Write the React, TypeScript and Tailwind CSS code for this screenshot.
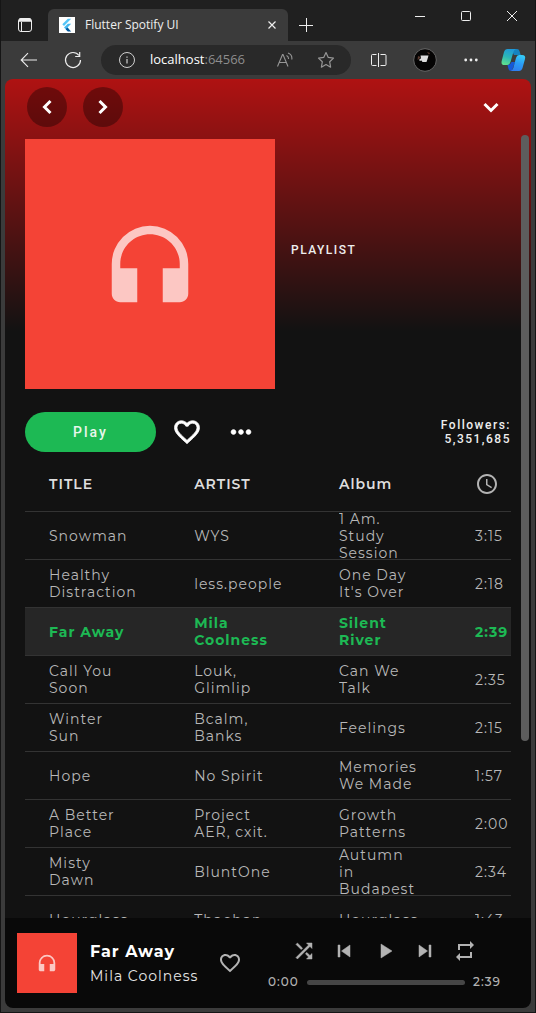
import type { ReactNode } from "react";
import {
  MdHeadphones, MdFavoriteBorder, MdMoreHoriz, MdAccessTime, MdShuffle, MdSkipPrevious,
  MdPlayArrow, MdSkipNext, MdRepeat,
} from "react-icons/md";

type Song = { title: string; artist: string; album: string; time: string };

const songs: Song[] = [
  { title: "Snowman", artist: "WYS", album: "1 Am.\nStudy\nSession", time: "3:15" },
  { title: "Healthy\nDistraction", artist: "less.people", album: "One Day\nIt's Over", time: "2:18" },
  { title: "Far Away", artist: "Mila\nCoolness", album: "Silent\nRiver", time: "2:39" },
  { title: "Call You\nSoon", artist: "Louk,\nGlimlip", album: "Can We\nTalk", time: "2:35" },
  { title: "Winter\nSun", artist: "Bcalm,\nBanks", album: "Feelings", time: "2:15" },
  { title: "Hope", artist: "No Spirit", album: "Memories\nWe Made", time: "1:57" },
  { title: "A Better\nPlace", artist: "Project\nAER, cxit.", album: "Growth\nPatterns", time: "2:00" },
  { title: "Misty\nDawn", artist: "BluntOne", album: "Autumn\nin\nBudapest", time: "2:34" },
  { title: "Hourglass", artist: "Thaehan", album: "Hourglass", time: "1:43" },
];

function TitleBar() {
  return (
    <div className="flex h-[41px] shrink-0 bg-[#202020] text-[#eeeeee]">
      <button aria-label="Tab actions" className="flex w-[47px] items-center justify-center pt-2">
        <svg width="16" height="16" viewBox="0 0 16 16" fill="none" stroke="currentColor">
          <rect x="1.5" y="1.5" width="13" height="13" rx="2.5" />
          <path d="M2 3.5h12M2.5 2.5h11" strokeWidth="2.5" />
          <path d="M4.5 5v9" />
        </svg>
      </button>
      <div className="mt-[9px] flex w-60 items-center rounded-t-md bg-[#3b3b3b] pl-[11px] pr-2">
        <svg width="16" height="16" viewBox="0 0 16 16" className="shrink-0">
          <rect width="16" height="16" fill="#fff" />
          <path d="M8.8 1.8h3.4L5 9 3.3 7.3z" fill="#54c5f8" />
          <path d="M8.8 6.8h3.4L8.5 10.5l1.8 1.7-2 1.6L5 10.5z" fill="#45b9f0" />
          <path d="M8.3 10.6l-1.6 1.7 2.1 2.1h3.400z" fill="#01579b" />
        </svg>
        <span className="flex-1 pl-[10px] font-['Open_Sans',sans-serif] text-xs">Flutter Spotify UI</span>
        <button aria-label="Close tab" className="p-1">
          <svg width="8" height="8" viewBox="0 0 8 8" stroke="currentColor" strokeWidth="1.2"><path d="M.5.5l7 7M7.5.5l-7 7" /></svg>
        </button>
      </div>
      <button aria-label="New tab" className="flex w-9 items-center justify-center pt-2">
        <svg width="14" height="14" viewBox="0 0 14 14" stroke="currentColor"><path d="M7.5 0v14M0 7.5h14" /></svg>
      </button>
      <div className="ml-auto flex h-8">
        <button aria-label="Minimize" className="flex w-[46px] items-center justify-center">
          <svg width="10" height="10" viewBox="0 0 10 10" stroke="currentColor"><path d="M0 5.5h10" /></svg>
        </button>
        <button aria-label="Maximize" className="flex w-[46px] items-center justify-center">
          <svg width="10" height="10" viewBox="0 0 10 10" fill="none" stroke="currentColor"><rect x=".5" y=".5" width="9" height="9" rx="1" /></svg>
        </button>
        <button aria-label="Close" className="flex w-[46px] items-center justify-center">
          <svg width="10" height="10" viewBox="0 0 10 10" stroke="currentColor"><path d="M0 0l10 10M10 0L0 10" /></svg>
        </button>
      </div>
    </div>
  );
}

function Toolbar() {
  return (
    <div className="flex h-[38px] shrink-0 items-center bg-[#3b3b3b] pl-[19px] pr-[9px] text-[#eeeeee]">
      <button aria-label="Back" className="w-11">
        <svg width="17" height="16" viewBox="0 0 17 16" fill="none" stroke="currentColor" strokeWidth="1.1"><path d="M17 8H1.5M8 1.2L1.2 8 8 14.8" /></svg>
      </button>
      <button aria-label="Refresh" className="w-[37px]">
        <svg width="18" height="18" viewBox="0 0 18 18" fill="none" stroke="currentColor" strokeWidth="1.2"><path d="M16.5 9A7.5 7.5 0 1 1 15 4.5M15.7 1v4.5h-4.5" /></svg>
      </button>
      <div className="flex h-[30px] min-w-0 flex-1 items-center rounded-full bg-[#292929] pl-[18px] pr-4">
        <svg width="16" height="16" viewBox="0 0 16 16" fill="none" stroke="#d0d0d0" className="shrink-0">
          <circle cx="8" cy="8" r="7.5" /><path d="M8 7v4.5M8 4.5v1.2" strokeWidth="1.2" />
        </svg>
        <span className="flex-1 pl-[15px] font-['Open_Sans',sans-serif] text-[13px] text-white">localhost<span className="text-[#8d8d8d]">:64566</span></span>
        <button aria-label="Read aloud" className="mr-6 text-[#969696]">
          <svg width="16" height="16" viewBox="0 0 16 16" fill="none" stroke="currentColor" strokeWidth="1.1"><path d="M.5 14.5l5-12H6l5 12M2.5 10.500H9M9.5 3.500A3.500 3.500 0 0 1 11.500 7M11 1a6 6 0 0 1 3.800 6.500" /></svg>
        </button>
        <button aria-label="Add to favorites" className="text-[#969696]">
          <svg width="18" height="18" viewBox="0 0 18 18" fill="none" stroke="currentColor" strokeWidth="1.2" strokeLinejoin="round"><path d="M9 1.5l2.3 4.9 5.2.7-3.8 3.7.9 5.4L9 13.6l-4.6 2.600.9-5.400L1.500 7.100l5.200-.7z" /></svg>
        </button>
      </div>
      <div className="flex items-center pl-5">
        <button aria-label="Split screen">
          <svg width="16" height="14" viewBox="0 0 16 14" fill="none" stroke="currentColor"><path d="M5.5 1.5h-4a1 1 0 0 0-1 1v9a1 1 0 0 0 1 1h4M9.5 1.5H14a1 1 0 0 1 1 1v9a1 1 0 0 1-1 1H9.5M7.5 0v14" /></svg>
        </button>
        <button aria-label="Profile" className="ml-[26px]">
          <svg width="24" height="24" viewBox="0 0 24 24">
            <circle cx="12" cy="12" r="11.3" fill="#050404" stroke="#777" strokeWidth=".8" />
            <path d="M7.500 7.500h8l-1 3.500-1 3h-4l-1-1.500-2 .5v-2l1.500-.5z" fill="#dcdcdc" />
            <path d="M5 8l2.500 1-1.500 2-1.500 1zM14 4l3 1-1 1.500z" fill="#5b3b30" />
          </svg>
        </button>
        <button aria-label="Settings and more" className="ml-[27px]">
          <svg width="14" height="4" viewBox="0 0 14 4" fill="currentColor"><circle cx="1.7" cy="2" r="1.4" /><circle cx="7" cy="2" r="1.4" /><circle cx="12.3" cy="2" r="1.4" /></svg>
        </button>
        <button aria-label="Copilot" className="ml-[23px]">
          <svg width="25" height="24" viewBox="0 0 25 24">
            <defs>
              <linearGradient id="cpA" x1=".6" y1="0" x2=".3" y2="1"><stop stopColor="#1f98d8" /><stop offset=".5" stopColor="#2bb5b8" /><stop offset="1" stopColor="#5fe08e" /></linearGradient>
              <linearGradient id="cpB" x1=".6" y1="0" x2=".3" y2="1"><stop stopColor="#35c9f6" /><stop offset=".5" stopColor="#2a9bf5" /><stop offset="1" stopColor="#2f7df0" /></linearGradient>
            </defs>
            <path d="M10 1h6q2 0 2.500 2l1.200 4H13z" fill="#1583c0" />
            <path d="M6.500 1H15q-1.800.5-2.600 3L9.500 14q-1 3-3.500 3H3.500Q-.2 17 .7 13L3 4q1-3 3.500-3z" fill="url(#cpA)" />
            <path d="M6.500 17q3 0 4-3h3.500l-3 8.500q-2.500 1-3.300-1z" fill="#1558d8" />
            <path d="M18 7h3q4 0 3 4l-2.500 9q-1 3-3.500 3h-8.500q2-.5 2.800-3L15 10q.8-3 3-3z" fill="url(#cpB)" />
          </svg>
        </button>
      </div>
    </div>
  );
}

function Chevron({ d }: { d: string }) {
  return (
    <svg width="28" height="28" viewBox="0 0 28 28" fill="none" stroke="currentColor" strokeWidth="3">
      <path d={d} />
    </svg>
  );
}

function Cell({ children }: { children: ReactNode }) {
  return (
    <div className="flex h-[47px] items-center overflow-hidden pt-px">
      <span className="whitespace-pre-line">{children}</span>
    </div>
  );
}

function TrackTable() {
  return (
    <table className="mt-1 w-full table-fixed border-separate border-spacing-0 text-left text-sm leading-[17px] tracking-[1px] text-[#b8b8b8]">
      <colgroup>
        <col className="w-[34.8%]" />
        <col className="w-[29.8%]" />
        <col className="w-[28%]" />
        <col />
      </colgroup>
      <thead>
        <tr className="h-[55px] text-[#dedede]">
          <th className="pl-6 pt-0.5 font-semibold">TITLE</th>
          <th className="pt-0.5 font-semibold">ARTIST</th>
          <th className="pt-0.5 font-semibold">Album</th>
          <th><MdAccessTime aria-label="Duration" size={24} color="#b3b3b3" /></th>
        </tr>
      </thead>
      <tbody>
        {songs.map((s) => (
          <tr key={s.title} className={s.title === "Far Away" ? "bg-[#262626] font-bold text-[#1db954]" : ""}>
            <td className="border-t border-[#333333] pl-6"><Cell>{s.title}</Cell></td>
            <td className="border-t border-[#333333]"><Cell>{s.artist}</Cell></td>
            <td className="border-t border-[#333333]"><Cell>{s.album}</Cell></td>
            <td className="whitespace-nowrap border-t border-[#333333]"><Cell>{s.time}</Cell></td>
          </tr>
        ))}
      </tbody>
    </table>
  );
}

function Playlist() {
  return (
    <main className="relative min-h-0 flex-1 overflow-hidden bg-[linear-gradient(#af1212_0,#121212_252px)]">
      <nav className="flex h-14 items-center gap-4 pl-[22px] pr-[26px] text-white">
        <button aria-label="Previous page" className="flex size-10 items-center justify-center rounded-full bg-black/35"><Chevron d="M17.500 8l-6 6 6 6" /></button>
        <button aria-label="Next page" className="flex size-10 items-center justify-center rounded-full bg-black/35"><Chevron d="M10.500 8l6 6-6 6" /></button>
        <button aria-label="Account menu" className="ml-auto"><Chevron d="M7.500 11l6.500 6.500 6.500-6.500" /></button>
      </nav>
      <div className="pl-5 pr-5 pt-1">
        <header className="flex items-center gap-4">
          <div className="flex size-[250px] shrink-0 items-center justify-center bg-[#f44336]">
            <MdHeadphones size={102} className="text-white/70" />
          </div>
          <p className="pb-7 font-[Roboto,sans-serif] text-xs font-medium tracking-[1.5px] text-[#eeeeee]">PLAYLIST</p>
        </header>
        <div className="mt-[23px] flex h-10 items-center">
          <button className="h-10 w-[131px] rounded-full bg-[#1db954] font-[Roboto,sans-serif] text-sm font-medium tracking-[2px] text-[#e8f6ec]">Play</button>
          <button aria-label="Like playlist" className="ml-4 text-white"><MdFavoriteBorder size={30} className="[&>path:last-child]:stroke-current [&>path:last-child]:[stroke-width:0.6]" /></button>
          <button aria-label="More options" className="ml-6 text-white"><MdMoreHoriz size={30} className="[&>path:last-child]:stroke-current [&>path:last-child]:[stroke-width:0.4]" /></button>
          <p className="ml-auto text-right font-[Roboto,sans-serif] text-xs font-medium leading-[14px] tracking-[1.5px] text-[#eeeeee]">Followers:<br />5,351,685</p>
        </div>
        <TrackTable />
      </div>
      <div className="absolute right-[2px] top-14 h-[606px] w-2 rounded-full bg-[#5d5d5d]" />
    </main>
  );
}

const boldIcon = "[&>path:last-child]:stroke-current [&>path:last-child]:[stroke-width:0.5]";

function Player() {
  return (
    <footer className="flex h-[90px] shrink-0 items-center bg-[#090909] pl-3 pr-[30px] text-[#b3b3b3]">
      <div className="flex size-[60px] shrink-0 items-center justify-center bg-[#f44336]">
        <MdHeadphones size={22} className="text-white/70" />
      </div>
      <div className="w-[130px] pl-[13px] pt-[2px] tracking-[1px] text-[#e6e6e6]">
        <p className="whitespace-nowrap font-bold leading-6 text-white">Far Away</p>
        <p className="whitespace-nowrap text-sm leading-6">Mila Coolness</p>
      </div>
      <button aria-label="Like song" className="ml-[11px]"><MdFavoriteBorder size={24} /></button>
      <div className="ml-[26px] min-w-0 flex-1">
        <div className="flex h-[38px] items-center justify-between pl-6 pr-6">
          <button aria-label="Shuffle"><MdShuffle size={24} className={boldIcon} /></button>
          <button aria-label="Previous"><MdSkipPrevious size={24} className={boldIcon} /></button>
          <button aria-label="Play song"><MdPlayArrow size={24} className={boldIcon} /></button>
          <button aria-label="Next"><MdSkipNext size={24} className={boldIcon} /></button>
          <button aria-label="Repeat"><MdRepeat size={24} /></button>
        </div>
        <div className="flex h-6 items-center gap-2 text-xs font-medium tracking-[1px]">
          <span>0:00</span>
          <div className="h-[5px] flex-1 rounded-full bg-[#464646]" />
          <span>2:39</span>
        </div>
      </div>
    </footer>
  );
}

export default function App() {
  return (
    <div className="flex h-screen flex-col border-x border-b border-[#151515] bg-[#3b3b3b] font-[Montserrat,Inter,sans-serif]">
      <TitleBar />
      <Toolbar />
      <div className="mx-1 mb-1 flex min-h-0 flex-1 flex-col overflow-hidden rounded-lg">
        <Playlist />
        <Player />
      </div>
    </div>
  );
}
